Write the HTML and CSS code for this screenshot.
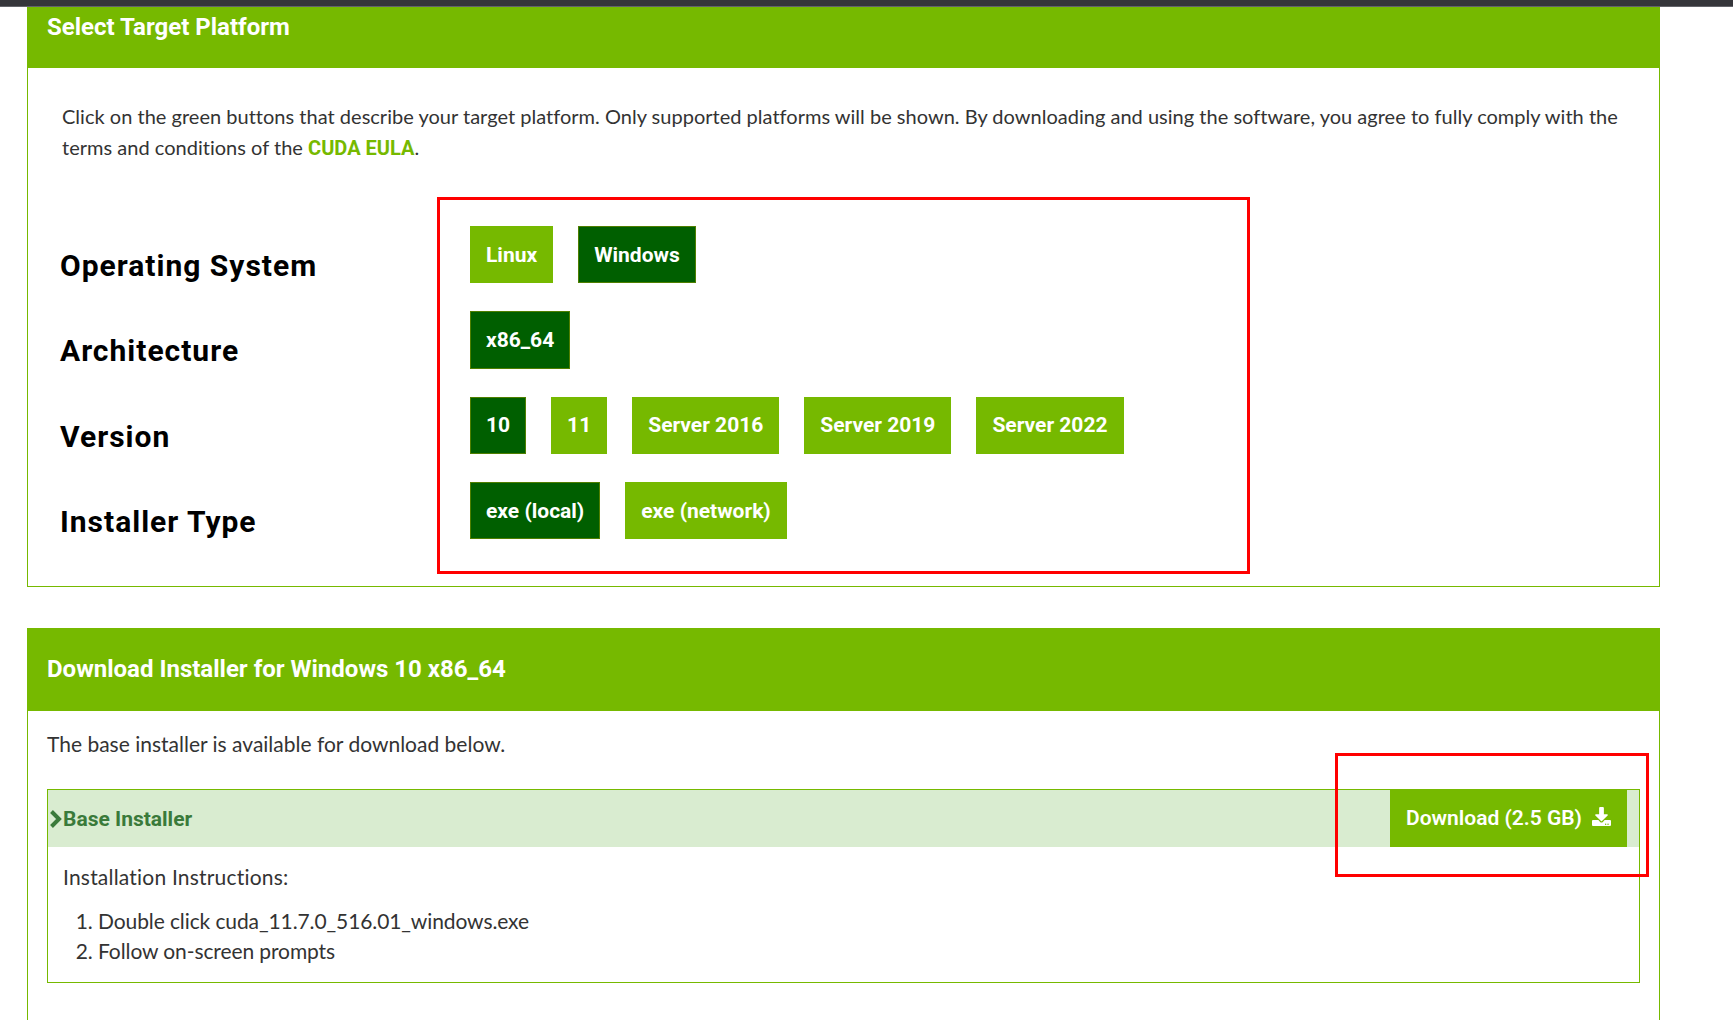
FILE: index.html
```html
<!DOCTYPE html>
<html lang="en">
<head>
<meta charset="utf-8">
<title>CUDA Toolkit Download</title>
<link rel="stylesheet" href="styles.css">
</head>
<body>
<div class="topbar"></div>
<main class="page">
  <section class="card card-select">
    <h2 class="card-head head-select">Select Target Platform</h2>
    <p class="intro">Click on the green buttons that describe your target platform. Only supported platforms will be shown. By downloading and using the software, you agree to fully comply with the terms and conditions of the <a class="eula" href="#">CUDA EULA</a>.</p>
    <div class="selector">
      <div class="label">Operating System</div>
      <div class="opts"><span class="btn">Linux</span><span class="btn on">Windows</span></div>
      <div class="label">Architecture</div>
      <div class="opts"><span class="btn on">x86_64</span></div>
      <div class="label">Version</div>
      <div class="opts"><span class="btn on">10</span><span class="btn">11</span><span class="btn">Server 2016</span><span class="btn">Server 2019</span><span class="btn">Server 2022</span></div>
      <div class="label">Installer Type</div>
      <div class="opts"><span class="btn on">exe (local)</span><span class="btn">exe (network)</span></div>
    </div>
  </section>
  <section class="card card-download">
    <h2 class="card-head head-download">Download Installer for Windows 10 x86_64</h2>
    <div class="card-body">
      <p class="lead">The base installer is available for download below.</p>
      <div class="panel">
        <div class="panel-head">
          <svg class="chev" viewBox="0 0 13 18" aria-hidden="true"><path d="M2.500 1.500L10 9L2.500 16.500" fill="none" stroke="#3a7a3a" stroke-width="4"/></svg>
          <span class="panel-title">Base Installer</span>
          <a class="dl" href="#">Download (2.5 GB)
            <svg class="dl-icon" viewBox="0 0 512 512" aria-hidden="true"><path fill="#fff" d="M216 0h80c13.300 0 24 10.700 24 24v168h87.700c17.800 0 26.700 21.500 14.100 34.100L269.700 378.300c-7.500 7.500-19.800 7.500-27.300 0L90.100 226.100c-12.600-12.600-3.700-34.100 14.100-34.100H192V24c0-13.300 10.700-24 24-24zm296 376v112c0 13.300-10.700 24-24 24H24c-13.300 0-24-10.700-24-24V376c0-13.300 10.700-24 24-24h146.700l49 49c20.100 20.100 52.500 20.100 72.600 0l49-49H488c13.300 0 24 10.700 24 24zm-124 88c0-11-9-20-20-20s-20 9-20 20 9 20 20 20 20-9 20-20zm64 0c0-11-9-20-20-20s-20 9-20 20 9 20 20 20 20-9 20-20z"/></svg>
          </a>
        </div>
        <div class="panel-body">
          <p class="steps-title">Installation Instructions:</p>
          <ol class="steps">
            <li>Double click cuda_11.7.0_516.01_windows.exe</li>
            <li>Follow on-screen prompts</li>
          </ol>
        </div>
      </div>
    </div>
  </section>
</main>
<div class="mark mark-a"></div>
<div class="mark mark-b"></div>
</body>
</html>
```
FILE: styles.css
```css
* { box-sizing: border-box; }
html, body { margin: 0; height: 1020px; overflow: hidden; background: #fff; }
body { font-family: "Lato", "Open Sans", sans-serif; color: #333; font-size: 20px; }
.topbar { height: 7px; background: #35363a; border-bottom: 1px solid #63646a; }
.page { padding-left: 27px; width: 1660px; }
.card { border: 1px solid #76b900; border-top: 0; }
.card-select { height: 580px; }
.card-download { margin-top: 41px; height: 400px; border-bottom: 0; }
.card-head { margin: 0 -1px; background: #76b900; color: #fff; font-family: "Roboto", sans-serif; font-weight: 700; font-size: 24px; padding-left: 20px; }
.head-select { height: 61px; line-height: 40px; }
.head-download { height: 83px; line-height: 83px; }
.intro { margin: 0; padding: 33px 20px 0 34px; line-height: 31px; letter-spacing: .015px; }
.eula { color: #76b900; font-family: "Roboto", sans-serif; font-weight: 700; text-decoration: none; }
.selector { margin-top: 62px; display: grid; grid-template-columns: 410px 1fr; grid-auto-rows: 57.330px; row-gap: 28px; padding-left: 32px; }
.label { font-family: "Roboto", sans-serif; font-weight: 700; font-size: 30px; letter-spacing: 1px; color: #000; line-height: 36px; padding-top: 22px; white-space: nowrap; }
.opts { display: flex; gap: 25px; }
.btn { display: flex; align-items: center; padding: 0 16px; background: #76b900; color: #fff; font-family: "Roboto", sans-serif; font-weight: 700; font-size: 21px; }
.btn.on { background: #005f00; border: 1px solid #4f7f00; padding: 0 15px; }
.card-body { padding: 0 19px; }
.lead { margin: 0; padding-top: 19px; line-height: 27px; font-size: 21px; }
.panel { margin-top: 32px; border: 1px solid #76b900; height: 194px; }
.panel-head { height: 57px; background: #d9ecd0; display: flex; align-items: center; padding-left: 1px; }
.chev { width: 13px; height: 18px; margin-right: 1px; }
.panel-title { font-family: "Roboto", sans-serif; font-weight: 700; font-size: 21px; color: #3a7a3a; }
.dl { margin-left: auto; margin-right: 12px; height: 58px; margin-top: -1px; width: 237px; background: #76b900; color: #fff; font-family: "Roboto", sans-serif; font-weight: 600; font-size: 21px; text-decoration: none; display: flex; align-items: center; justify-content: center; gap: 10px; white-space: nowrap; }
.dl-icon { width: 19px; height: 19px; margin-top: -3px; }
.panel-body { padding: 16px 15px 0; font-size: 21px; }
.steps-title { margin: 0; line-height: 27px; letter-spacing: .2px; }
.steps { margin: 16px 0 0; padding-left: 35px; line-height: 30px; letter-spacing: -.1px; }
.mark { position: absolute; border: 3px solid #f00; pointer-events: none; }
.mark-a { left: 437px; top: 197px; width: 813px; height: 377px; }
.mark-b { left: 1335px; top: 753px; width: 314px; height: 124px; }
```
